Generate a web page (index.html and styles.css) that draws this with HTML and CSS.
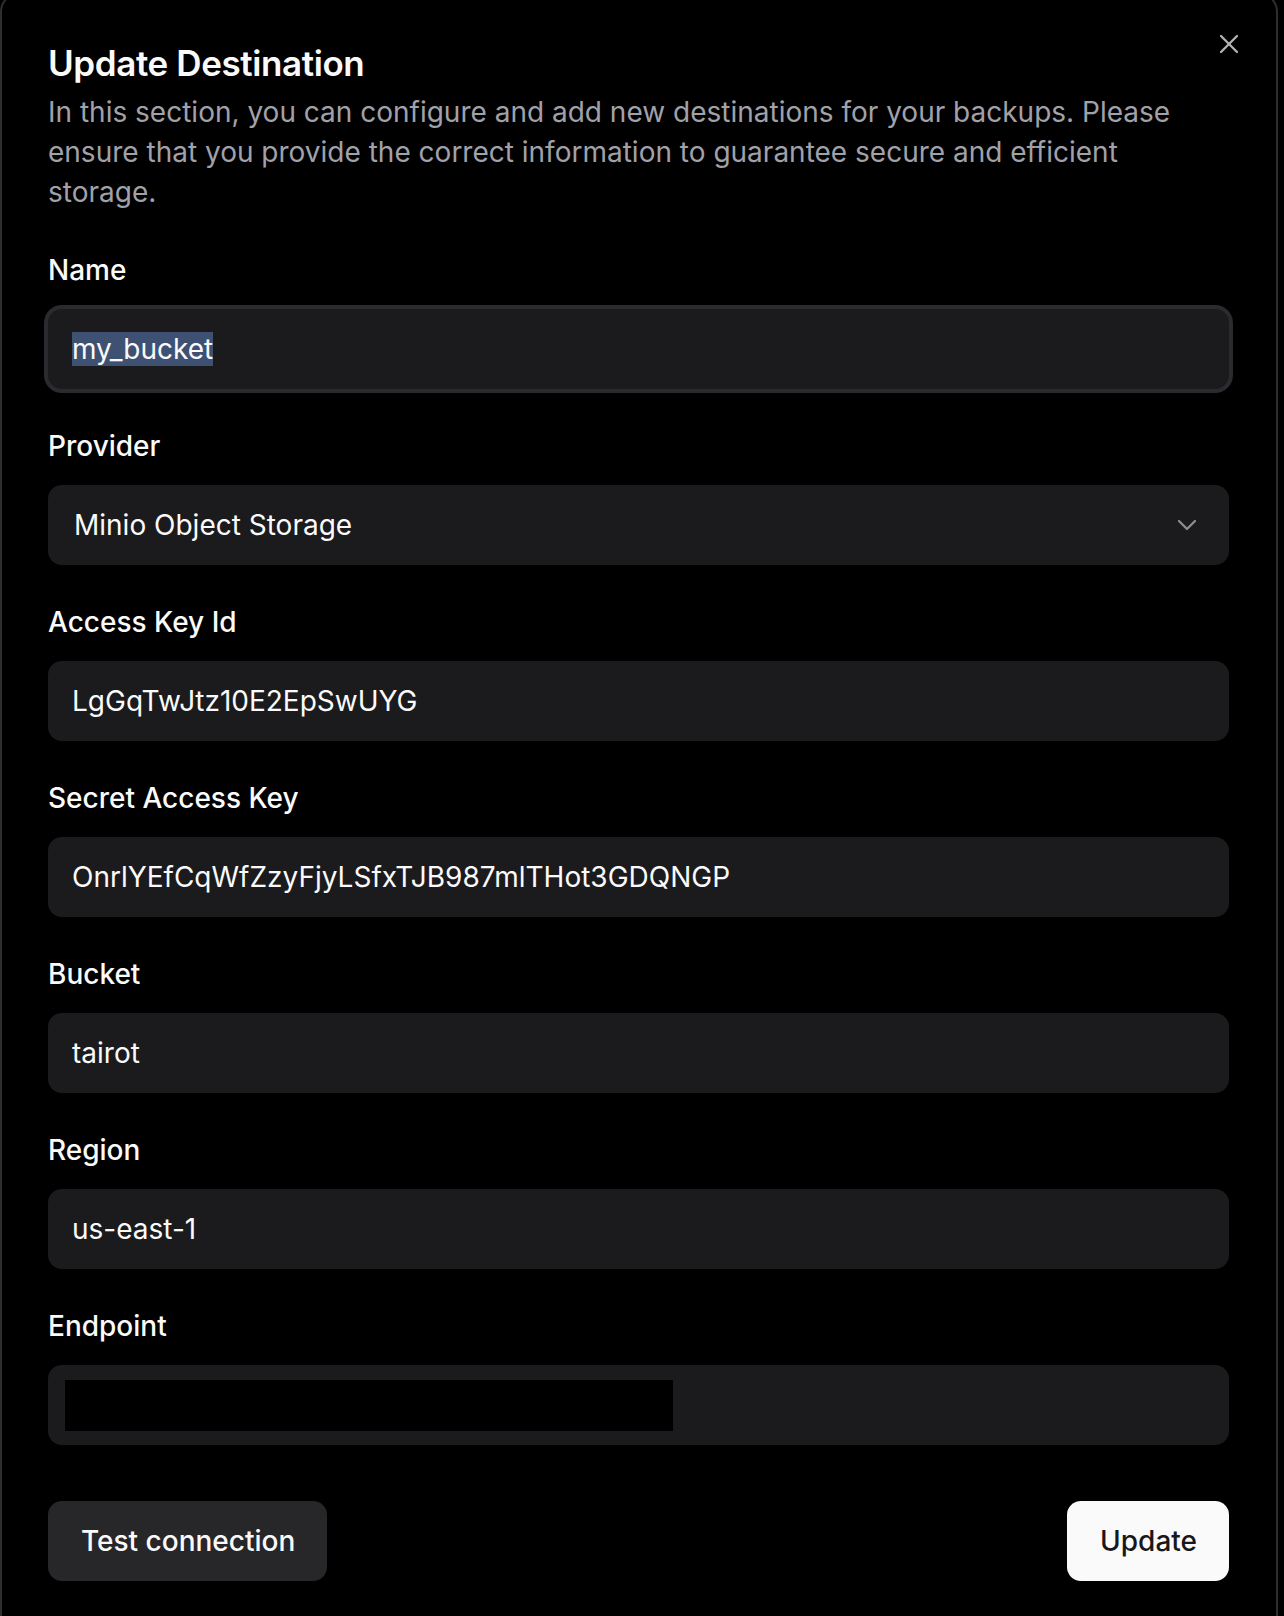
FILE: index.html
```html
<!DOCTYPE html>
<html lang="en">
<head>
<meta charset="utf-8">
<title>Update Destination</title>
<link rel="stylesheet" href="styles.css">
</head>
<body>
<div class="dialog">
  <button class="close" type="button" aria-label="Close">
    <svg viewBox="0 0 24 24" width="32" height="32" fill="none" stroke="currentColor" stroke-width="1.7" stroke-linecap="round" stroke-linejoin="round"><path d="M18 6 6 18"/><path d="m6 6 12 12"/></svg>
  </button>
  <header class="head">
    <h1 class="title">Update Destination</h1>
    <p class="desc">In this section, you can configure and add new destinations for your backups. Please ensure that you provide the correct information to guarantee secure and efficient storage.</p>
  </header>
  <div class="fields">
    <div class="field">
      <div class="label">Name</div>
      <div class="input focused"><span class="sel">my_bucket</span></div>
    </div>
    <div class="field">
      <div class="label">Provider</div>
      <div class="input select"><span class="select-text">Minio Object Storage</span>
        <svg class="chev" viewBox="0 0 24 24" width="32" height="32" fill="none" stroke="currentColor" stroke-width="1.7" stroke-linecap="round" stroke-linejoin="round"><path d="m6 9 6 6 6-6"/></svg>
      </div>
    </div>
    <div class="field">
      <div class="label">Access Key Id</div>
      <div class="input">LgGqTwJtz10E2EpSwUYG</div>
    </div>
    <div class="field">
      <div class="label">Secret Access Key</div>
      <div class="input">OnrlYEfCqWfZzyFjyLSfxTJB987mlTHot3GDQNGP</div>
    </div>
    <div class="field">
      <div class="label">Bucket</div>
      <div class="input">tairot</div>
    </div>
    <div class="field">
      <div class="label">Region</div>
      <div class="input">us-east-1</div>
    </div>
    <div class="field">
      <div class="label">Endpoint</div>
      <div class="input endpoint"><span class="redact"></span></div>
    </div>
  </div>
  <div class="actions">
    <button class="btn secondary" type="button">Test connection</button>
    <button class="btn primary" type="button">Update</button>
  </div>
</div>
</body>
</html>
```

FILE: styles.css
```css
* { box-sizing: border-box; }
html, body { margin: 0; padding: 0; background: #000; }
body {
  font-family: Inter, "Noto Sans", "Liberation Sans", sans-serif;
  color: #fafafa;
  overflow: hidden;
}
.dialog {
  position: relative;
  width: 1278px;
  margin-top: -8px;
  border: 2px solid #2e2e32;
  border-radius: 20px;
  background: #000;
  padding: 48px 47px 60px 46px;
  display: flex;
  flex-direction: column;
}
.close {
  position: absolute;
  top: 34px;
  right: 31px;
  width: 32px;
  height: 32px;
  padding: 0;
  border: 0;
  background: transparent;
  color: #b4b4b8;
  display: flex;
}
.head { display: flex; flex-direction: column; gap: 8px; }
.title {
  margin: 0;
  font-size: 35px;
  line-height: 42px;
  font-weight: 600;
  letter-spacing: -0.4px;
}
.desc {
  margin: 0;
  font-size: 28px;
  line-height: 40px;
  color: #a1a1aa;
}
.fields {
  margin-top: 41px;
  display: flex;
  flex-direction: column;
  gap: 40px;
}
.field { display: flex; flex-direction: column; gap: 22px; }
.label {
  font-size: 28px;
  line-height: 34px;
  font-weight: 500;
}
.input {
  height: 80px;
  border-radius: 14px;
  background: #1b1b1e;
  display: flex;
  align-items: center;
  padding: 0 24px;
  font-size: 28px;
  color: #fafafa;
}
.input.focused { box-shadow: 0 0 0 4px #2b2b2f; }
.sel { background: #3e5172; line-height: 34px; }
.select { justify-content: space-between; padding-left: 26px; padding-right: 26px; }
.chev { color: #8d8d92; }
.endpoint { padding-left: 17px; }
.redact { width: 608px; height: 51px; background: #000; }
.actions {
  margin-top: 56px;
  display: flex;
  justify-content: space-between;
}
.btn {
  height: 80px;
  border: 0;
  border-radius: 14px;
  padding: 0 32px 0 33px;
  font-family: inherit;
  font-size: 28px;
  font-weight: 500;
}
.secondary { background: #27272a; color: #fafafa; }
.primary { background: #fafafa; color: #18181b; }
```
